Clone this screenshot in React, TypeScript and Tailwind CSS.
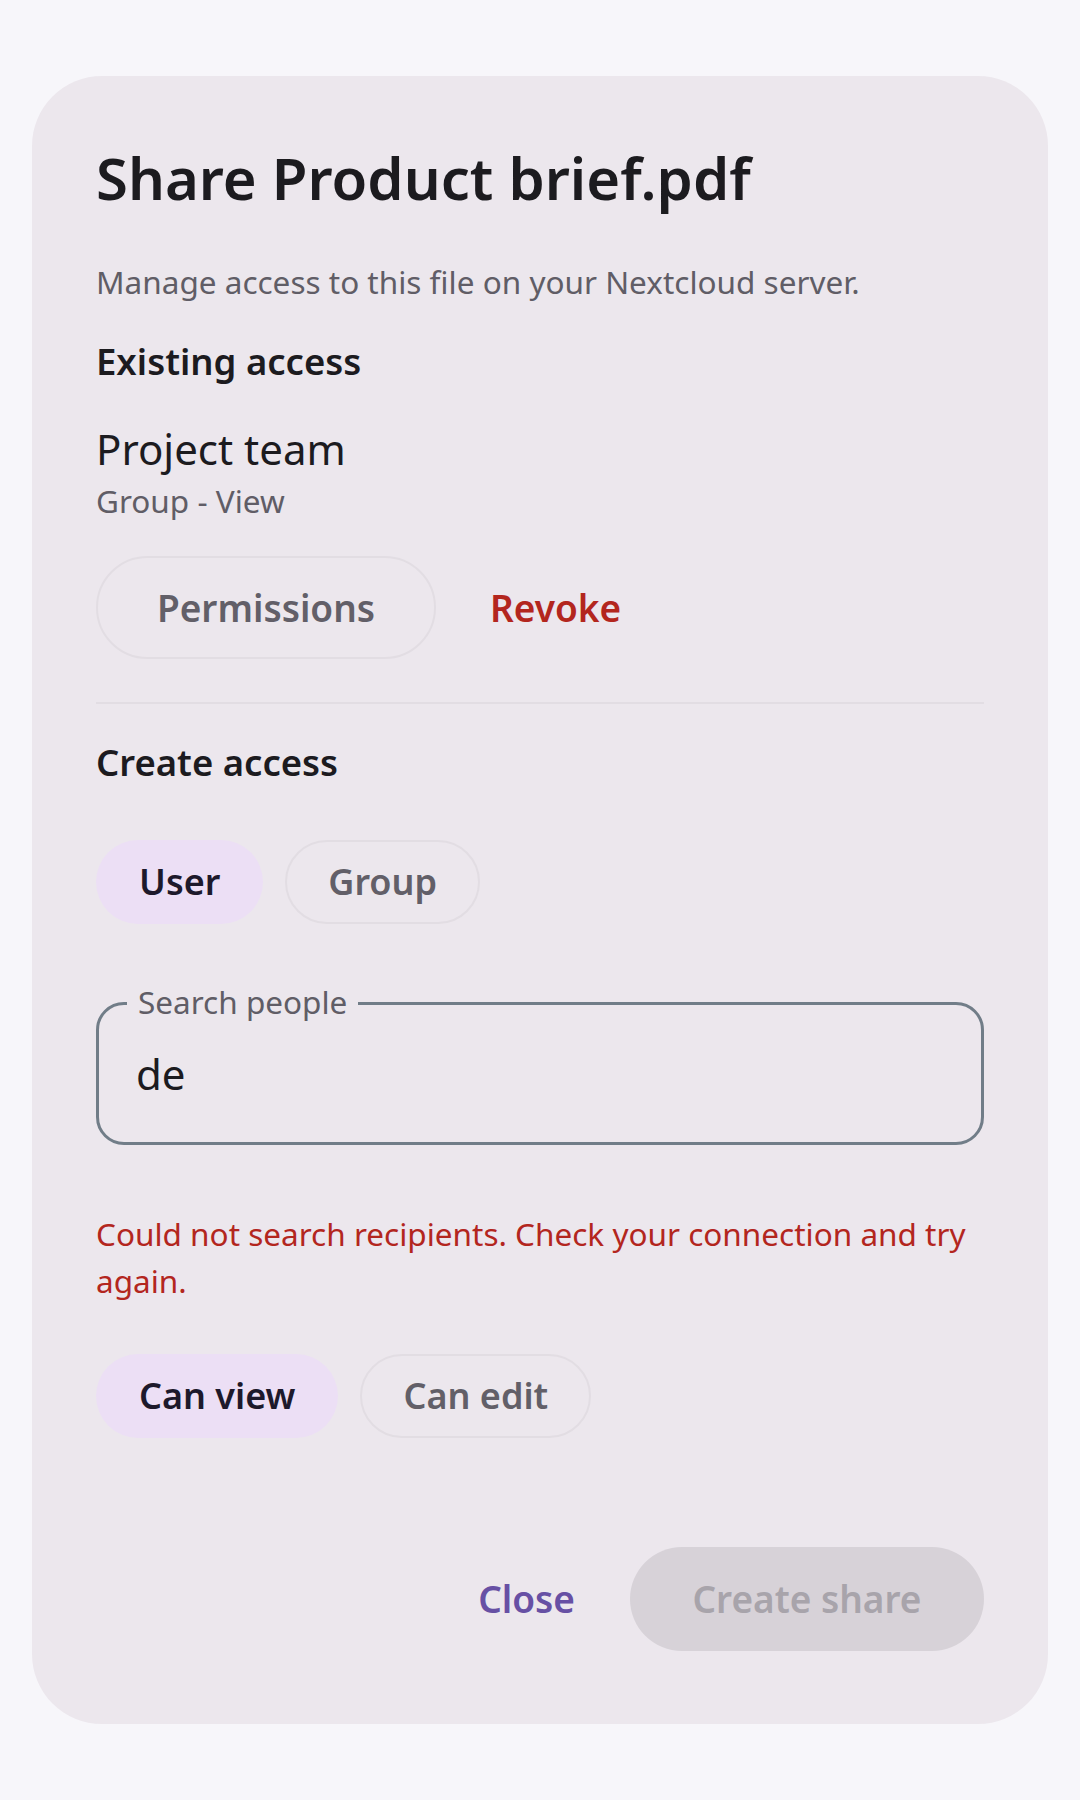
import { useState } from "react";

type Option = { id: string; label: string };

const shareTypes: Option[] = [
  { id: "user", label: "User" },
  { id: "group", label: "Group" },
];

const permissions: Option[] = [
  { id: "view", label: "Can view" },
  { id: "edit", label: "Can edit" },
];

function ChoiceChip({ label, selected, onClick }: { label: string; selected: boolean; onClick: () => void }) {
  return (
    <button
      type="button"
      onClick={onClick}
      className={
        selected
          ? "flex h-[84px] items-center rounded-full border-2 border-transparent bg-[#ecdff5] px-[41px] text-[36px] font-semibold leading-[44px] text-[#1d192b]"
          : "flex h-[84px] items-center rounded-full border-2 border-[#e2dde3] px-[41px] text-[36px] font-semibold leading-[44px] text-[#625f68]"
      }
    >
      {label}
    </button>
  );
}

export default function App() {
  const [shareType, setShareType] = useState("user");
  const [permission, setPermission] = useState("view");
  const [query, setQuery] = useState("de");

  return (
    <div className="min-h-[1800px] w-full bg-[#f7f6fa] px-8 pt-[76px] font-['Noto_Sans',sans-serif]">
      <div className="flex flex-col rounded-[70px] bg-[#ece7ed] px-16 pb-[73px] pt-16">
        <h1 className="text-[58px] font-semibold leading-[76px] text-[#1c1b1f]">Share Product brief.pdf</h1>
        <p className="mt-[45px] text-[31.5px] leading-[42px] text-[#605d66]">
          Manage access to this file on your Nextcloud server.
        </p>

        <h2 className="mt-[35px] text-[36.5px] font-semibold leading-[46px] text-[#1c1b1f]">Existing access</h2>
        <div className="mt-[37px] text-[42px] leading-[56px] text-[#1c1b1f]">Project team</div>
        <div className="mt-1 text-[31.5px] leading-[40px] text-[#605d66]">Group - View</div>

        <div className="mt-[35px] flex items-center">
          <button
            type="button"
            className="flex h-[103px] w-[340px] items-center justify-center rounded-full border-2 border-[#e2dde3] text-[37px] font-semibold leading-[44px] text-[#625f68]"
          >
            Permissions
          </button>
          <button type="button" className="ml-[18px] px-[36px] text-[37px] font-semibold leading-[44px] text-[#b3261e]">
            Revoke
          </button>
        </div>

        <div className="mt-[43px] h-[2px] bg-[#e2dde3]" />

        <h2 className="mt-[35px] text-[36.5px] font-semibold leading-[46px] text-[#1c1b1f]">Create access</h2>

        <div className="mt-[55px] flex gap-[22px]">
          {shareTypes.map((t) => (
            <ChoiceChip key={t.id} label={t.label} selected={shareType === t.id} onClick={() => setShareType(t.id)} />
          ))}
        </div>

        <div className="relative mt-[78px] h-[143px] rounded-[28px] border-[3px] border-[#717d88]">
          <span className="absolute -top-[21px] left-[28px] bg-[#ece7ed] px-[11px] text-[31.5px] leading-[36px] text-[#605d66]">
            Search people
          </span>
          <input
            value={query}
            onChange={(e) => setQuery(e.target.value)}
            className="h-full w-full bg-transparent pl-[37px] pr-8 text-[42px] leading-[56px] text-[#1c1b1f] outline-none"
          />
        </div>

        <p className="mt-[65px] text-[31.5px] leading-[47px] text-[#b3261e]">
          Could not search recipients. Check your connection and try again.
        </p>

        <div className="mt-[50px] flex gap-[22px]">
          {permissions.map((p) => (
            <ChoiceChip key={p.id} label={p.label} selected={permission === p.id} onClick={() => setPermission(p.id)} />
          ))}
        </div>

        <div className="mt-[109px] flex items-center justify-end">
          <button type="button" className="px-[40px] text-[37px] font-semibold leading-[46px] text-[#6750a4]">
            Close
          </button>
          <button
            type="button"
            disabled
            className="ml-[15px] flex h-[104px] w-[354px] items-center justify-center rounded-full bg-[#d7d2d8] text-[37px] font-semibold leading-[46px] text-[#a8a4ab]"
          >
            Create share
          </button>
        </div>
      </div>
    </div>
  );
}
